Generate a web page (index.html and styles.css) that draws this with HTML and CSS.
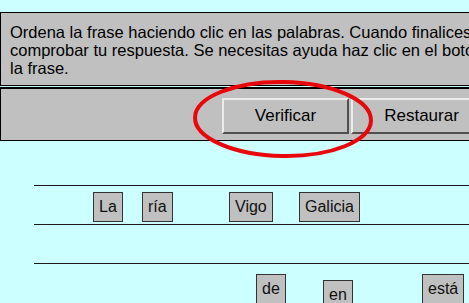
FILE: index.html
```html
<!DOCTYPE html>
<html lang="es">
<head>
<meta charset="utf-8">
<link rel="stylesheet" href="styles.css">
</head>
<body>
<div class="page">
  <div class="panel intro">
    <p class="instructions">Ordena la frase haciendo clic en las palabras. Cuando finalices haz clic en el botón Verificar para<br>comprobar tu respuesta. Se necesitas ayuda haz clic en el botón Restaurar para ver<br>la frase.</p>
  </div>
  <div class="panel actions">
    <button class="btn">Verificar</button>
    <button class="btn btn-wide">Restaurar</button>
    <svg class="mark" width="196" height="90" viewBox="0 0 196 90">
      <ellipse cx="96" cy="43" rx="88" ry="37" fill="none" stroke="#e8080c" stroke-width="4" transform="rotate(1 96 43)"/>
    </svg>
  </div>
  <div class="board">
    <div class="rule rule1"></div>
    <div class="rule rule2"></div>
    <div class="rule rule3"></div>
    <span class="tile" style="left:93px;top:192px">La</span>
    <span class="tile" style="left:142px;top:192px">ría</span>
    <span class="tile" style="left:229px;top:192px">Vigo</span>
    <span class="tile" style="left:299px;top:192px">Galicia</span>
    <span class="tile" style="left:256px;top:274px">de</span>
    <span class="tile" style="left:323px;top:280px">en</span>
    <span class="tile" style="left:422px;top:274px">está</span>
  </div>
</div>
</body>
</html>
```

FILE: styles.css
```css
html, body {
  margin: 0;
  padding: 0;
  background: #ccffff;
  overflow: hidden;
  width: 469px;
  height: 303px;
}
.page {
  position: relative;
  width: 469px;
  height: 303px;
  padding-top: 12px;
  box-sizing: border-box;
  font-family: "Liberation Sans", Arial, sans-serif;
  color: #000;
}
.panel {
  background: #c0c0c0;
  border: 1px solid #000;
  width: 700px;
  box-sizing: border-box;
}
.intro {
  height: 74px;
  padding: 10px 0 0 9px;
}
.instructions {
  margin: 0;
  font-size: 16.5px;
  line-height: 18px;
  white-space: nowrap;
}
.actions {
  position: relative;
  margin-top: 1px;
  height: 54px;
  display: flex;
  align-items: flex-start;
  gap: 2px;
  padding: 9px 0 0 221px;
  border-top-width: 2px;
  border-top-style: double;
  border-top-color: #000;
}
.btn {
  width: 127px;
  height: 36px;
  background: #c0c0c0;
  font-family: "Liberation Sans", Arial, sans-serif;
  font-size: 17px;
  color: #000;
  border-style: solid;
  border-width: 2px;
  border-color: #ececec #505050 #505050 #ececec;
  padding: 0;
  margin: 0;
}
.btn-wide {
  width: 141px;
}
.mark {
  position: absolute;
  left: 186px;
  top: -13px;
}
.board {
  position: absolute;
  left: 0;
  top: 0;
  width: 469px;
  height: 303px;
  pointer-events: none;
}
.rule {
  position: absolute;
  left: 34px;
  right: 0;
  height: 1px;
  background: #1a1a1a;
}
.rule1 { top: 185px; }
.rule2 { top: 224px; }
.rule3 { top: 263px; }
.tile {
  position: absolute;
  height: 30px;
  box-sizing: border-box;
  padding: 0 5px;
  background: #c0c0c0;
  border: 1px solid #333;
  font-size: 16px;
  line-height: 28px;
  color: #111;
}
```
